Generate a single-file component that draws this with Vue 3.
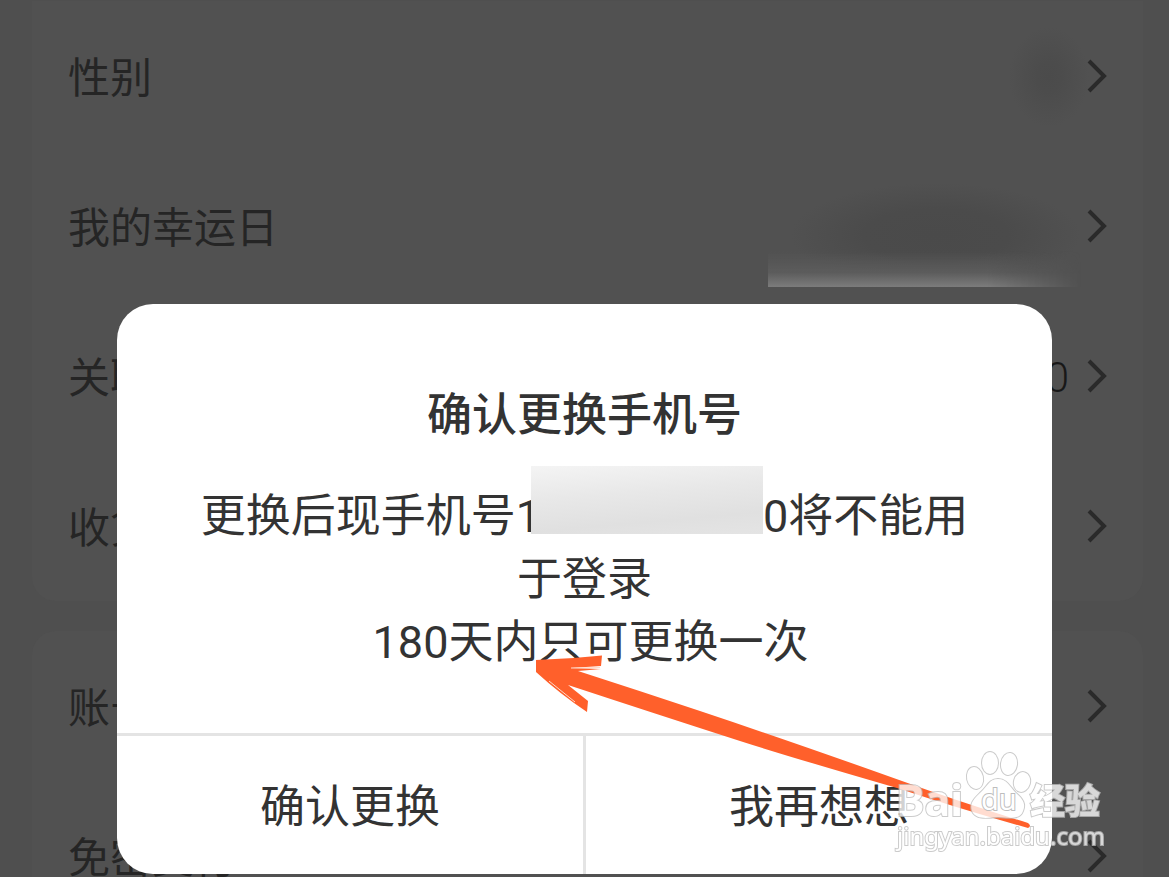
<script setup>
const groups = [
  [
    { label: '性别', mask: 'short' },
    { label: '我的幸运日', mask: 'long' },
    { label: '关联', value: '0' },
    { label: '收货' },
  ],
  [{ label: '账号' }, { label: '免密支付' }],
]
</script>

<template>
  <div class="page">
    <main class="settings">
      <section v-for="(rows, i) in groups" :key="i" class="group">
        <a v-for="row in rows" :key="row.label" class="row" href="#">
          <span class="label">{{ row.label }}</span>
          <span v-if="row.value" class="value">{{ row.value }}</span>
          <span v-if="row.mask" :class="['mask', row.mask]"></span>
          <svg class="chevron" viewBox="0 0 20 36" aria-hidden="true">
            <path d="M2 3 L17 18 L2 33" />
          </svg>
        </a>
      </section>
    </main>

    <div class="overlay">
      <div class="dialog" role="dialog" aria-labelledby="dialog-title">
        <div class="content">
          <h1 id="dialog-title">确认更换手机号</h1>
          <p>更换后现手机号1<span class="hidden-number"></span>0将不能用于登录</p>
          <p class="limit">180天内只可更换一次</p>
        </div>
        <div class="actions">
          <button type="button">确认更换</button>
          <button type="button">我再想想</button>
        </div>

        <svg class="arrow" viewBox="534 654 500 178" aria-hidden="true">
          <path
            class="shaft"
            d="M536 660 Q570 659 602 655.500 L601 666 L571 668 L601 669 L578 671 Q640 691 700 711 Q790 741 902 781 Q960 802 1028 823 Q1032 826 1028 828 Q960 809 897 788 Q790 757 740 741 Q650 712 568 685 L588 701 L587 712 Q560 694 536 672 Z"
          />
          <path class="streak" d="M571 668 L600 667.500 M549 681 L575 702" />
        </svg>

        <svg class="watermark" viewBox="890 745 224 112" aria-hidden="true">
          <g class="mark">
            <ellipse cx="976" cy="778" rx="8" ry="11" transform="rotate(-12 976 778)" />
            <ellipse cx="991" cy="763" rx="8" ry="11" />
            <ellipse cx="1010" cy="764" rx="8" ry="11" transform="rotate(8 1010 764)" />
            <ellipse cx="1023" cy="782" rx="8" ry="10" transform="rotate(16 1023 782)" />
            <path
              d="M999 779 C1008 779 1011 787 1017 793 C1024 799 1027 804 1024 811 C1021 820 1010 818 999 817 C988 818 977 820 973 811 C970 803 976 798 982 792 C988 787 990 779 999 779 Z"
            />
            <text class="brand" x="897" y="816">Bai</text>
            <text class="brand-cn" x="1031" y="814">经验</text>
            <text class="site" x="898" y="845">jingyan.baidu.com</text>
          </g>
          <text class="brand-du" x="982" y="810">du</text>
        </svg>
      </div>
    </div>
  </div>
</template>

<style>
body {
  margin: 0;
  background: #505050;
}
</style>

<style scoped>
.page {
  position: relative;
  box-sizing: border-box;
  height: 100vh;
  overflow: hidden;
  background: #4f4f4f;
  font-family: Roboto, 'Noto Sans CJK SC', sans-serif;
}

.settings {
  display: flex;
  flex-direction: column;
  gap: 30px;
  padding: 1px 26px 0 32px;
}

.group {
  flex: none;
  border-radius: 24px;
  background: #515151;
}

.group:first-child {
  border-radius: 0 0 24px 24px;
}

.row {
  position: relative;
  display: flex;
  align-items: center;
  height: 150px;
  padding: 0 36px;
  color: #252525;
  font-size: 42px;
  line-height: 60px;
  text-decoration: none;
}

.label {
  flex: 1;
  padding-top: 5px;
}

.value {
  margin-right: 18px;
  padding-top: 4px;
  color: #181818;
  font-weight: 350;
}

.chevron {
  width: 20px;
  height: 36px;
  fill: none;
  stroke: #2a2a2a;
  stroke-width: 4;
}

.mask {
  position: absolute;
}

.mask.short {
  top: 26px;
  right: 54px;
  width: 80px;
  height: 100px;
  background: radial-gradient(closest-side, #4b4b4b, #4c4c4c 30%, #51515100);
}

.mask.long {
  right: 62px;
  bottom: 14px;
  width: 290px;
  height: 104px;
  background: radial-gradient(closest-side, #4a4a4a, #4b4b4b 50%, #51515100);
}

.mask.long::after {
  content: '';
  position: absolute;
  inset: 68px 0 0 -23px;
  background: linear-gradient(#78787800, #5c5c5c 60%, #7c7c7c);
  mask-image: linear-gradient(90deg, #000 70%, transparent);
}

.overlay {
  position: absolute;
  inset: 0;
  display: flex;
  justify-content: center;
  align-items: flex-end;
  padding-bottom: 3px;
}

.dialog {
  position: relative;
  width: 80%;
  border-radius: 36px;
  background: #fff;
  color: #333;
}

.content {
  padding: 80px 80px 59px;
  text-align: center;
  font-size: 45px;
  line-height: 63px;
}

h1 {
  margin: 0 0 38px;
  font-size: 45px;
  line-height: 63px;
  font-weight: 500;
}

p {
  margin: 0;
}

.limit {
  padding-left: 12px;
}

.hidden-number {
  position: relative;
  display: inline-block;
  width: 222px;
  height: 1px;
}

.hidden-number::before {
  content: '';
  position: absolute;
  left: -10px;
  right: 0;
  bottom: -2px;
  height: 68px;
  background: linear-gradient(175deg, #f4f4f4, #e8e8e8 40%, #e0e0e0 75%, #e4e4e4);
}

.actions {
  display: flex;
  border-top: 3px solid #e4e4e4;
}

button {
  flex: 1;
  height: 138px;
  padding: 5px 0 0;
  border: 0;
  background: none;
  color: #333;
  font-family: inherit;
  font-size: 45px;
  font-weight: 400;
  line-height: 63px;
}

button + button {
  border-left: 3px solid #e4e4e4;
}

.arrow {
  position: absolute;
  left: 417px;
  top: 350px;
  width: 500px;
  height: 178px;
  pointer-events: none;
}

.shaft {
  fill: #ff602b;
}

.streak {
  fill: none;
  stroke: #ffd9c8;
  stroke-width: 1;
}

.watermark {
  position: absolute;
  right: -61px;
  bottom: 17px;
  width: 224px;
  height: 112px;
  pointer-events: none;
}

.mark {
  fill: #fff;
  stroke: #bdbdbd;
  stroke-width: 2;
  paint-order: stroke;
  opacity: 0.78;
}

.brand {
  font: 700 43px 'Noto Sans', sans-serif;
}

.brand-du {
  fill: #fff;
  stroke: #bdbdbd;
  stroke-width: 2;
  paint-order: stroke;
  font: 400 29px 'Noto Sans', sans-serif;
}

.brand-cn {
  font: 900 35px 'Noto Sans CJK SC', sans-serif;
}

.site {
  font: 400 24px 'Noto Sans', sans-serif;
}
</style>
